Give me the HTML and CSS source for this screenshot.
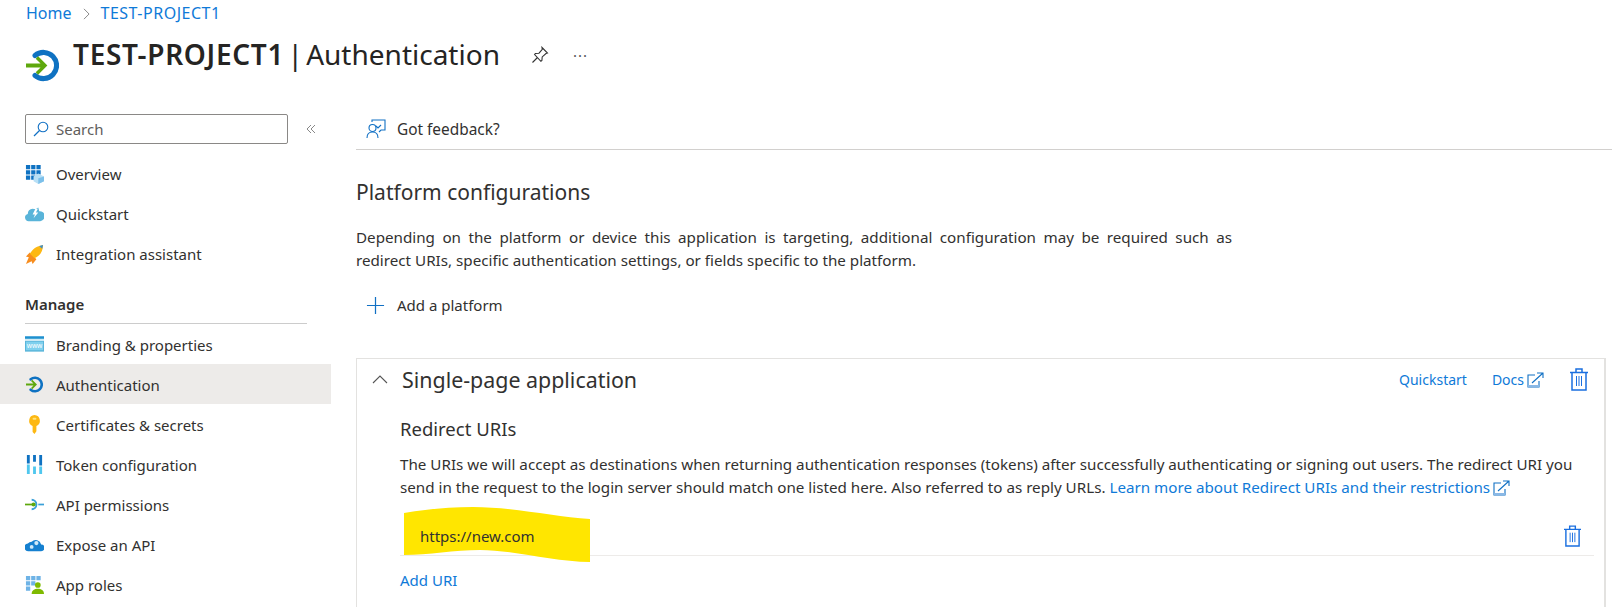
FILE: index.html
```html
<!DOCTYPE html>
<html lang="en">
<head>
<meta charset="utf-8">
<title>TEST-PROJECT1 | Authentication</title>
<link rel="stylesheet" href="styles.css">
</head>
<body>
<nav class="crumbs"><a>Home</a><svg class="crumb-sep" viewBox="0 0 8 14"><path d="M1 1l6 6-6 6" fill="none" stroke="#777" stroke-width="1"/></svg><a class="crumb-project">TEST-PROJECT1</a></nav>
<header class="head">
  <svg class="head-icon" viewBox="0 0 34 34"><use href="#auth"/></svg>
  <h1 class="title"><b>TEST-PROJECT1</b> | Authentication</h1>
  <svg class="pin" viewBox="0 0 18 18"><path d="M11 1.500l5.500 5.500-1.500.6-3.800 3.300-.3 3.600-1 .8L3.600 8.500l.8-1 3.600-.3 3.300-3.800zM6.500 11.500L1.500 16.500" fill="none" stroke="#333" stroke-width="1.100"/></svg>
  <span class="dots">···</span>
</header>
<div class="body">
  <aside class="side">
    <div class="search-row">
      <div class="search"><svg class="search-ico" viewBox="0 0 16 16"><circle cx="10" cy="6" r="4.800" fill="none" stroke="#1170c4" stroke-width="1.100"/><path d="M6.500 9.500L1 15" stroke="#1170c4" stroke-width="1.200"/></svg><span>Search</span></div>
      <svg class="collapse" viewBox="0 0 10 10"><path d="M5 1L1 5l4 4M9 1L5 5l4 4" fill="none" stroke="#888" stroke-width="1"/></svg>
    </div>
    <ul class="menu">
      <li class="item"><svg class="ico" viewBox="0 0 20 20"><path fill="#0f72c2" d="M1 0h4.500v4.500H1zM6.500 0H11v4.500H6.500zM12 0h4.500v4.500H12zM1 5.500h4.500V10H1zM6.500 5.500H11V10H6.500zM12 5.500h4.500V10H12zM1 11h4.500v4.500H1zM6.500 11H11v4.500H6.500z"/><path fill="#b8dff5" d="M14 9l6 3v5l-6 3-5-3v-5z"/><path fill="#7cc0ea" d="M14 14l6-2v5l-6 3z"/></svg>Overview</li>
      <li class="item"><svg class="ico" viewBox="0 0 20 20"><path fill="#59b4d9" d="M4 17a3.800 3.800 0 0 1-1-7.500 5 5 0 0 1 5-5.500l3 .5 3-2 1 4a4.500 4.500 0 0 1 1 10.500z"/><path fill="#fff" d="M11 4l-3 6h2.500l-1.500 4 5-6h-2.500l2-4z"/></svg>Quickstart</li>
      <li class="item"><svg class="ico" viewBox="0 0 20 20"><path fill="#f78d1e" d="M5 8l-4 4 3 1-3 7 6-3 1 3 4-5z"/><path fill="#fdb813" d="M6 8C9 3 14 1 19 0c0 5-2 10-7 13l-2 1-5-5z"/><path fill="#3b8fd0" d="M15 1l4-1-1 4z"/></svg>Integration assistant</li>
      <li class="group">Manage</li>
      <li class="item"><svg class="ico" viewBox="0 0 20 17"><rect width="20" height="16" fill="#59b4d9"/><rect width="20" height="2" fill="#1f8fd0"/><rect y="3" width="20" height="1.500" fill="#fff"/><rect x="1" y="5.500" width="18" height="9" fill="#7fd0ee"/><text class="www" x="10" y="12.500" text-anchor="middle">www</text></svg>Branding &amp; properties</li>
      <li class="item active"><svg class="ico ico-auth" viewBox="0 0 34 34"><use href="#auth"/></svg>Authentication</li>
      <li class="item"><svg class="ico" viewBox="0 0 20 20"><path fill="#fdb813" d="M10 0a6 6 0 0 1 2 11.500V17l-2 3-2-2v-6.500A6 6 0 0 1 10 0z"/><rect x="8" y="3" width="4" height="2" rx="1" fill="#ffe27a"/></svg>Certificates &amp; secrets</li>
      <li class="item"><svg class="ico" viewBox="0 0 20 20"><path fill="#0f72c2" d="M2 0h3v9H2zM8.500 0h3v7h-3zM15 0h3v11h-3z"/><path fill="#50c7ee" d="M2 10h3v10H2zM8.500 12h3v8h-3zM15 12h3v8h-3z"/></svg>Token configuration</li>
      <li class="item"><svg class="ico" viewBox="0 0 20 20"><path d="M7 5a5 5 0 1 1 0 10" fill="none" stroke="#3aa0d8" stroke-width="2"/><path d="M0 10h9" stroke="#5ea80d" stroke-width="1.800"/><circle cx="9" cy="10" r="2.200" fill="#5ea80d"/><path d="M14 10h6" stroke="#3aa0d8" stroke-width="1.800"/></svg>API permissions</li>
      <li class="item"><svg class="ico" viewBox="0 0 20 20"><path fill="#1580d0" d="M4 17a4 4 0 0 1-1-8 5 5 0 0 1 4-2 6 6 0 0 1 10 3 3.500 3.500 0 0 1 0 7z"/><circle cx="7" cy="12.500" r="2" fill="#cfe9f8"/><circle cx="12" cy="8.500" r="2.200" fill="#cfe9f8"/></svg>Expose an API</li>
      <li class="item"><svg class="ico" viewBox="0 0 20 20"><path fill="#6eb3e6" d="M1 1h4.500v4.500H1zM6.500 1H11v4.500H6.500zM12 1h4.500v4.500H12zM1 6.500h4.500V11H1zM6.500 6.500H11V11H6.500zM1 12h4.500v4.500H1zM12 1h4.500v4.500H12z"/><circle cx="13.500" cy="10.500" r="3" fill="#7fba00"/><path fill="#7fba00" d="M7 20c0-4 3-5.500 6.500-5.500S20 16 20 20z"/></svg>App roles</li>
    </ul>
  </aside>
  <main class="main">
    <div class="toolbar"><svg class="tool-ico" viewBox="0 0 20 20"><path d="M6 3V1h13v10h-4l-2 2" fill="none" stroke="#1170c4" stroke-width="1.100"/><path d="M10 7l2 2 3-3" fill="none" stroke="#1170c4" stroke-width="1.100"/><circle cx="6.500" cy="9" r="3.500" fill="none" stroke="#1170c4" stroke-width="1.100"/><path d="M1 19c0-4 2-6 5.500-6s5.500 2 5.500 6" fill="none" stroke="#1170c4" stroke-width="1.100"/></svg><span>Got feedback?</span></div>
    <section class="intro">
      <h2 class="section-title">Platform configurations</h2>
      <p class="lead">Depending on the platform or device this application is targeting, additional configuration may be required such as redirect URIs, specific authentication settings, or fields specific to the platform.</p>
      <div class="add"><svg class="plus" viewBox="0 0 20 20"><path d="M10 1v18M1 10h18" stroke="#1170c4" stroke-width="1.300"/></svg><span>Add a platform</span></div>
    </section>
    <section class="card">
      <div class="card-head">
        <svg class="chev" viewBox="0 0 16 9"><path d="M1 8l7-7 7 7" fill="none" stroke="#555" stroke-width="1.100"/></svg>
        <h3 class="card-title">Single-page application</h3>
        <a class="link head-link qs">Quickstart</a>
        <a class="link head-link">Docs<svg class="ext" viewBox="0 0 17 16"><path d="M8 3H1v12h11V9" fill="none" stroke="#1170c4" stroke-width="1.100"/><path d="M1 15h11v-2H1z" fill="#8ab8e6"/><path d="M5 11L16 1M10 1h6v5" fill="none" stroke="#1170c4" stroke-width="1.100"/></svg></a>
        <svg class="trash big" viewBox="0 0 18 23"><use href="#trash"/></svg>
      </div>
      <div class="card-body">
        <h4 class="sub">Redirect URIs</h4>
        <p class="desc">The URIs we will accept as destinations when returning authentication responses (tokens) after successfully authenticating or signing out users. The redirect URI you send in the request to the login server should match one listed here. Also referred to as reply URLs. <a class="link">Learn more about Redirect URIs and their restrictions<svg class="ext" viewBox="0 0 17 16"><path d="M8 3H1v12h11V9" fill="none" stroke="#1170c4" stroke-width="1.100"/><path d="M1 15h11v-2H1z" fill="#8ab8e6"/><path d="M5 11L16 1M10 1h6v5" fill="none" stroke="#1170c4" stroke-width="1.100"/></svg></a></p>
        <div class="uri-row">
          <svg class="blob" viewBox="0 0 186 55" preserveAspectRatio="none"><path fill="#ffe600" d="M0 6C25 2 45 0 69 0c41 0 81 10 117 12v43c-36 0-76-12-110-12-26 0-51 5-76 5z"/></svg>
          <span class="uri">https://new.com</span>
          <svg class="trash" viewBox="0 0 18 23"><use href="#trash"/></svg>
        </div>
        <a class="link add-uri">Add URI</a>
      </div>
    </section>
  </main>
</div>
<svg class="defs" aria-hidden="true"><defs>
  <g id="trash" fill="none" stroke="#1a6fe0" stroke-width="1.500"><path d="M0 4.500h18M2 4.500V22h14V4.500M6 4.500V1h6v3.500"/><path d="M6.500 8v10M9 8v10M11.500 8v10" stroke-width="1"/></g>
  <g id="auth"><path d="M9.300 6.700A13.500 13.500 0 1 1 9.300 27.300" fill="none" stroke="#0f72c2" stroke-width="5.200" stroke-linecap="round"/><path d="M0 15h15l-5-5 2.500-2.500L22 17l-9.500 9.500L10 24l5-5H0z" fill="#5ea80d"/></g>
</defs></svg>
</body>
</html>
```
FILE: styles.css
```css
* { box-sizing: border-box; }
html, body { margin: 0; height: 607px; overflow: hidden; }
body { background: #fff; color: #323130; font-family: "Noto Sans", "Open Sans", sans-serif; font-size: 15px; }
h1, h2, h3, h4, p, ul { margin: 0; padding: 0; font-weight: 400; }
ul { list-style: none; }
a { color: #0f7ad8; }
.defs { width: 0; height: 0; position: absolute; }

.crumbs { display: flex; align-items: center; height: 26px; padding-left: 26px; font-size: 16px; gap: 8px; }
.crumb-sep { width: 7px; height: 12px; margin: 2px 3px 0; }
.crumb-project { letter-spacing: .5px; }

.head { display: flex; height: 74px; padding-left: 26px; color: #252423; }
.head-icon { width: 33px; height: 33px; margin-top: 23px; }
.title { margin-left: 14px; margin-top: 9px; font-size: 28px; line-height: 38px; white-space: nowrap; word-spacing: -4px; }
.title b { font-weight: 600; letter-spacing: .7px; word-spacing: 0; }
.pin { width: 18px; height: 18px; margin: 20px 0 0 31px; }
.dots { margin: 19px 0 0 24px; font-size: 15px; color: #555; letter-spacing: 1px; }

.body { display: flex; height: 507px; overflow: hidden; }
.side { width: 331px; flex: none; }
.search-row { display: flex; align-items: center; height: 30px; margin-top: 14px; padding-left: 25px; }
.search { width: 263px; height: 30px; display: flex; align-items: center; border: 1px solid #8a8886; border-radius: 2px; padding-left: 7px; color: #605e5c; gap: 7px; }
.search-ico { width: 16px; height: 16px; }
.collapse { width: 10px; height: 10px; margin-left: 18px; }

.menu { margin-top: 10px; }
.item { display: flex; align-items: center; height: 40px; padding-left: 25px; }
.item.active { background: #edebe9; }
.ico { width: 19px; height: 19px; margin-right: 12px; flex: none; }
.ico-auth { width: 17px; height: 17px; margin: 0 13px 0 1px; }
.www { font-size: 7px; fill: #fff; font-family: "Noto Sans", sans-serif; }
.group { margin: 10px 24px 0 25px; height: 40px; padding-top: 8px; font-weight: 600; border-bottom: 1px solid #ccc; line-height: 24px; }
.group ~ .item { padding-top: 1px; }

.main { flex: 1; min-width: 0; padding: 0 0 0 25px; }
.toolbar { display: flex; align-items: center; height: 50px; border-bottom: 1px solid #d2d0ce; padding: 9px 0 0 10px; gap: 11px; font-size: 15.400px; }
.tool-ico { width: 20px; height: 20px; }
.intro { padding-top: 27px; }
.section-title { font-size: 21px; line-height: 30px; }
.lead { width: 876px; margin-top: 19px; font-size: 15.200px; line-height: 23px; text-align: justify; }
.add { display: flex; align-items: center; height: 30px; margin-top: 18px; padding-left: 10px; gap: 12px; }
.plus { width: 19px; height: 19px; }

.card { margin: 38px 6px 0 0; border: 1px solid #e3e2e0; border-right-width: 2px; border-bottom: 0; height: 260px; }
.card-head { display: flex; align-items: center; height: 41px; padding: 0 16px 0 15px; }
.chev { width: 16px; height: 9px; margin-right: 14px; }
.card-title { font-size: 21.400px; flex: 1; }
.link { color: #0f7ad8; }
.head-link { font-size: 14px; }
.qs { margin-right: 25px; }
.ext { width: 17px; height: 16px; margin-left: 3px; vertical-align: -3px; }
.trash { width: 17px; height: 22px; flex: none; }
.big { margin-left: 26px; width: 18px; height: 23px; }
.card-body { padding: 0 10px 0 43px; }
.sub { font-size: 18.500px; line-height: 26px; margin-top: 16px; }
.desc { margin-top: 11px; font-size: 15.200px; line-height: 22.500px; }
.uri-row { position: relative; display: flex; align-items: center; justify-content: space-between; height: 52px; margin-top: 6px; padding: 12px 13px 0 20px; border-bottom: 1px solid #edebe9; }
.blob { position: absolute; left: 4px; top: 3px; width: 186px; height: 55px; }
.uri { position: relative; }
.add-uri { display: block; margin-top: 14px; }
```
